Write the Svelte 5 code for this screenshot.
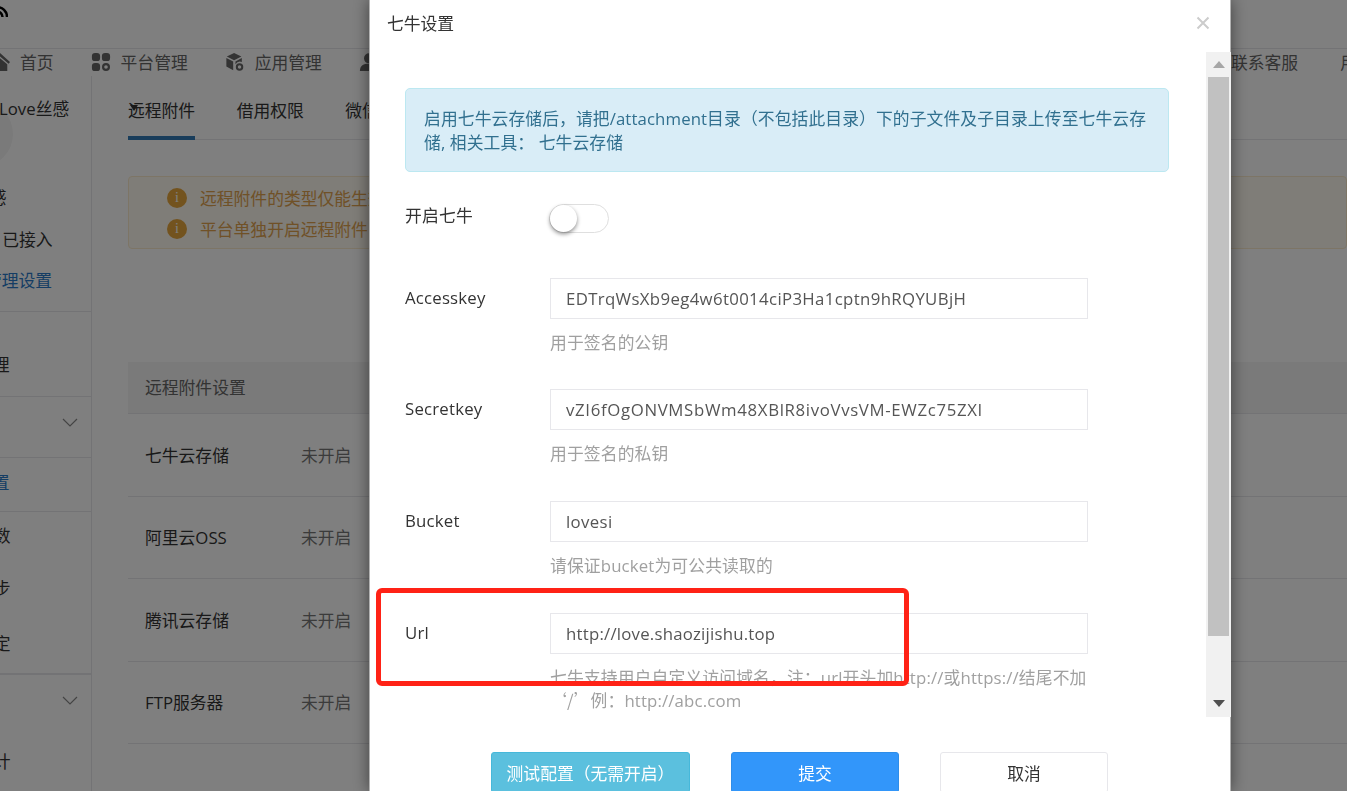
<script>
  const nav = [
    { label: "首页", icon: "home" },
    { label: "平台管理", icon: "grid" },
    { label: "应用管理", icon: "box" },
    { label: "用户管理", icon: "user" }
  ];
  const tabs = ["远程附件", "借用权限", "微信"];
  const storages = ["七牛云存储", "阿里云OSS", "腾讯云存储", "FTP服务器"];
  const fields = [
    { label: "Accesskey", value: "EDTrqWsXb9eg4w6t0014ciP3Ha1cptn9hRQYUBjH", help: "用于签名的公钥" },
    { label: "Secretkey", value: "vZI6fOgONVMSbWm48XBlR8ivoVvsVM-EWZc75ZXI", help: "用于签名的私钥" },
    { label: "Bucket", value: "lovesi", help: "请保证bucket为可公共读取的" },
    { label: "Url", value: "http://love.shaozijishu.top", help: "七牛支持用户自定义访问域名，注：url开头加http://或https://结尾不加", tail: true }
  ];
</script>

<div class="page">
  <header class="top">
    <svg class="logo" width="8" height="18" viewBox="0 0 8 18" aria-hidden="true">
      <path d="M-3 7A10 10 0 0 1 7 17M-3 11.500A5.500 5.500 0 0 1 2.500 17" fill="none" stroke="#000" stroke-width="2.500" />
    </svg>
  </header>

  <nav class="nav">
    {#each nav as item}
      <span class="nav-item">
        <svg width="20" height="20" viewBox="0 0 22 22" aria-hidden="true" fill="#666">
          {#if item.icon === "home"}
            <path d="M11 1 0 11l1.500 2L11 5l9.500 8 1.500-2z" />
            <path d="M3 13.500 11 7l8 6.500V21H3z" />
          {:else if item.icon === "grid"}
            <rect x="1" y="1" width="9" height="9" rx="3.500" />
            <rect x="12" y="1" width="9" height="9" rx="3.500" />
            <rect x="1" y="12" width="9" height="9" rx="3.500" />
            <circle cx="16.500" cy="16.500" r="3.200" fill="none" stroke="#666" stroke-width="2.400" />
          {:else if item.icon === "box"}
            <path d="M10 1 18 5 10 9 2 5zM1.500 6.500 9 10.500V20L1.500 16zM18.500 6.500V11a6 6 0 0 0-7 2.500V10.500z" />
            <circle cx="16" cy="16.500" r="3" fill="none" stroke="#666" stroke-width="2.200" />
          {:else}
            <circle cx="11" cy="7" r="5.500" />
            <path d="M1 21c0-6 4-8 10-8s10 2 10 8z" />
          {/if}
        </svg>
        {item.label}
      </span>
    {/each}
    <span class="nav-right">
      <span>联系客服</span>
      <span>用户</span>
    </span>
  </nav>

  <div class="layout">
    <aside class="side">
      <div class="avatar"></div>
      <p class="side-title">Love丝感</p>
      <p class="side-a">丝感</p>
      <p class="side-b">● 已接入</p>
      <p class="side-c">管理设置</p>
      <div class="side-rule"></div>
      <p class="side-d">管理</p>
      <div class="side-box short"><svg class="chev" width="16" height="10" viewBox="0 0 16 10"><path d="M1 1l7 7 7-7" fill="none" stroke="#888" stroke-width="1.200" /></svg></div>
      <p class="side-e">设置</p>
      <div class="side-box list">
        <p>参数</p>
        <p>同步</p>
        <p>绑定</p>
      </div>
      <div class="side-box last">
        <svg class="chev" width="16" height="10" viewBox="0 0 16 10"><path d="M1 1l7 7 7-7" fill="none" stroke="#888" stroke-width="1.200" /></svg>
        <p>统计</p>
      </div>
    </aside>

    <main class="main">
      <div class="tabs">
        {#each tabs as tab, i}
          <span class="tab" class:active={i === 0}>{tab}</span>
        {/each}
      </div>

      <div class="warn">
        <p><i>i</i>远程附件的类型仅能生效</p>
        <p><i>i</i>平台单独开启远程附件</p>
      </div>

      <div class="table-head">远程附件设置</div>
      {#each storages as name}
        <div class="row">
          <span class="row-name">{name}</span>
          <span class="row-state">未开启</span>
        </div>
      {/each}
    </main>
  </div>
</div>

<div class="overlay">
  <section class="modal">
    <div class="modal-head">
      <h2>七牛设置</h2>
      <svg class="close" width="14" height="14" viewBox="0 0 14 14" aria-hidden="true">
        <path d="M1.500 1.500l11 11M12.500 1.500l-11 11" stroke="#ccc" stroke-width="2" />
      </svg>
    </div>

    <div class="modal-body">
      <div class="content">
        <div class="notice">启用七牛云存储后，请把/attachment目录（不包括此目录）下的子文件及子目录上传至七牛云存储, 相关工具： 七牛云存储</div>

        <div class="form-row switch-row">
          <span class="label">开启七牛</span>
          <span class="switch"><span class="knob"></span></span>
        </div>

        {#each fields as field}
          <div class="form-row">
            <span class="label field-label">{field.label}</span>
            <div class="field">
              <div class="input">{field.value}</div>
              <p class="help">
                {field.help}
                {#if field.tail}
                  <br /><span class="quote">‘/’</span>例：http://abc.com
                {/if}
              </p>
            </div>
          </div>
        {/each}
      </div>

      <div class="scrollbar">
        <span class="arrow up"></span>
        <span class="track"><span class="thumb"></span></span>
        <span class="arrow down"></span>
      </div>
    </div>

    <div class="modal-foot">
      <button type="button" class="btn info">测试配置（无需开启）</button>
      <button type="button" class="btn primary">提交</button>
      <button type="button" class="btn plain">取消</button>
    </div>
  </section>

  <div class="mark"></div>
</div>

<style>
  :global(body) {
    margin: 0;
    background: #fff;
    overflow: hidden;
    font-family: "Open Sans", "Noto Sans CJK SC", sans-serif;
    font-size: 16.8px;
    color: #333;
    text-spacing-trim: space-all;
  }

  p {
    margin: 0;
  }

  .page {
    height: 791px;
    overflow: hidden;
  }

  .top {
    height: 49px;
    border-bottom: 1px solid #e7e7eb;
    box-sizing: border-box;
  }

  .logo {
    display: block;
  }

  .nav {
    display: flex;
    align-items: center;
    height: 27px;
    box-sizing: border-box;
    padding-bottom: 2px;
    color: #666;
    margin-left: -10px;
    white-space: nowrap;
  }

  .nav-item {
    display: flex;
    align-items: center;
    gap: 10px;
    margin-right: 37px;
  }

  .nav-right {
    display: flex;
    gap: 42px;
    margin-left: 738px;
  }

  .layout {
    display: flex;
    height: 715px;
  }

  .side {
    position: relative;
    flex: none;
    width: 92px;
    box-sizing: border-box;
    border-right: 1px solid #e7e7eb;
    overflow: hidden;
    white-space: nowrap;
  }

  .avatar {
    position: absolute;
    left: -53px;
    top: 25px;
    width: 66px;
    height: 66px;
    border-radius: 50%;
    background: #f4f4f4;
  }

  .side p {
    position: relative;
    line-height: 24px;
  }

  .side-title {
    margin-left: -1px;
    padding-top: 21px;
  }

  .side-a {
    margin: 65px 0 0 -27px;
  }

  .side-b {
    margin: 18px 0 0 -19px;
  }

  .side-c {
    margin: 17px 0 0 -15px;
    color: #2b7bc9;
  }

  .side-rule {
    margin-top: 18px;
    border-top: 1px solid #e7e7eb;
  }

  .side-d {
    margin: 41px 0 0 -24px;
  }

  .side-box {
    position: relative;
    border-top: 1px solid #e7e7eb;
    border-bottom: 1px solid #e7e7eb;
  }

  .short {
    margin-top: 19px;
    height: 60px;
  }

  .chev {
    position: absolute;
    right: 13px;
    top: 21px;
  }

  .side-e {
    margin: 13px 0 0 -24px;
    color: #2b7bc9;
  }

  .list {
    margin-top: 16px;
    height: 163px;
    padding-top: 12px;
    box-sizing: border-box;
  }

  .list p {
    margin: 0 0 29px -23px;
  }

  .list p:nth-child(2) {
    margin-bottom: 31px;
  }

  .last {
    height: 120px;
    border-bottom: 0;
    padding-top: 75px;
    box-sizing: border-box;
  }

  .last p {
    margin-left: -23px;
  }

  .main {
    flex: 1;
    min-width: 0;
    padding-left: 36px;
  }

  .tabs {
    display: flex;
    gap: 41.500px;
    height: 64px;
    box-sizing: border-box;
    padding-top: 23px;
    border-bottom: 1px solid #e7e7eb;
    white-space: nowrap;
  }

  .tab {
    position: relative;
    height: 40px;
    line-height: 24px;
  }

  .tab.active {
    box-sizing: border-box;
    height: 41px;
    border-bottom: 4px solid #337ab7;
  }

  .tab.active::before {
    content: "";
    position: absolute;
    left: 2px;
    top: 6px;
    border-left: 4px solid transparent;
    border-right: 4px solid transparent;
    border-top: 6px solid #333;
  }

  .warn {
    margin-top: 36px;
    height: 73px;
    box-sizing: border-box;
    padding: 5px 0 0 38px;
    background: #fffaf0;
    border: 1px solid #faebcc;
    border-radius: 4px;
    color: #e0a24e;
  }

  .warn p {
    display: flex;
    align-items: center;
    height: 31px;
  }

  .warn i {
    width: 20px;
    height: 20px;
    margin-right: 13px;
    border-radius: 50%;
    background: #e6a63c;
    color: #fff;
    font: 14px/20px "Liberation Serif", serif;
    text-align: center;
  }

  .table-head {
    margin-top: 113px;
    height: 52px;
    line-height: 52px;
    padding-left: 17px;
    background: #f4f4f4;
    border-bottom: 1px solid #e7e7eb;
    box-sizing: border-box;
    color: #666;
  }

  .row {
    display: flex;
    align-items: center;
    height: 82.500px;
    box-sizing: border-box;
    padding-left: 17px;
    border-bottom: 1px solid #e7e7eb;
  }

  .row-name {
    width: 156px;
  }

  .row-state {
    color: #777;
  }

  .overlay {
    position: fixed;
    inset: 0;
    background: rgba(0, 0, 0, 0.5);
  }

  .modal {
    position: absolute;
    left: 369px;
    top: 0;
    width: 862px;
    height: 791px;
    box-sizing: border-box;
    background: #fff;
    border-left: 1px solid rgba(0, 0, 0, 0.3);
    border-right: 1px solid rgba(0, 0, 0, 0.3);
    box-shadow: 0 0 15px rgba(0, 0, 0, 0.5);
  }

  .modal-head {
    display: flex;
    align-items: center;
    justify-content: space-between;
    height: 52px;
    box-sizing: border-box;
    padding: 0 20px 6px 17px;
  }

  .modal-head h2 {
    margin: 0;
    font-size: 16.8px;
    font-weight: 400;
    color: #333;
  }

  .close {
    display: block;
  }

  .modal-body {
    display: flex;
    height: 665px;
  }

  .content {
    flex: 1;
    min-width: 0;
    overflow: hidden;
    padding: 36px 37px 0 35px;
  }

  .notice {
    box-sizing: border-box;
    height: 84px;
    padding: 18px;
    line-height: 24px;
    letter-spacing: 0.1px;
    background: #d9edf7;
    border: 1px solid #bce8f1;
    border-radius: 5px;
    color: #31708f;
  }

  .form-row {
    display: grid;
    grid-template-columns: 145px 538px;
    margin-bottom: 36px;
  }

  .form-row:nth-child(3) {
    margin-bottom: 35px;
  }

  .switch-row {
    margin: 32px 0 44px;
    height: 30px;
  }

  .label {
    line-height: 24px;
    letter-spacing: 0.2px;
  }

  .field-label {
    padding-top: 8px;
  }

  .switch {
    position: relative;
    display: block;
    width: 60px;
    height: 29px;
    margin-left: -1px;
    box-sizing: border-box;
    border: 1px solid #dfdfdf;
    border-radius: 15px;
  }

  .knob {
    position: absolute;
    left: 0;
    top: 0;
    width: 27px;
    height: 27px;
    border-radius: 50%;
    background: #fff;
    box-shadow: 0 2px 4px rgba(0, 0, 0, 0.45);
  }

  .input {
    height: 41px;
    box-sizing: border-box;
    padding: 0 15px;
    line-height: 39px;
    letter-spacing: 0.35px;
    border: 1px solid #e7e7eb;
    color: #555;
  }

  .form-row:nth-child(4) .input {
    letter-spacing: 0.66px;
  }

  .form-row:nth-child(6) .input {
    letter-spacing: 0.22px;
  }

  .help {
    margin-top: 12px;
    line-height: 23px;
    letter-spacing: 0.14px;
    color: #a0a0a0;
    white-space: nowrap;
  }

  .quote {
    font-family: "Noto Sans CJK SC", sans-serif;
  }

  .scrollbar {
    position: relative;
    flex: none;
    display: flex;
    flex-direction: column;
    align-items: center;
    width: 25px;
    margin-right: -1px;
    background: #f1f1f1;
  }

  .arrow {
    display: block;
    flex: none;
    width: 0;
    height: 0;
    border-left: 6px solid transparent;
    border-right: 6px solid transparent;
  }

  .arrow.up {
    margin: 9px 0;
    border-bottom: 7px solid #a6a6a6;
  }

  .arrow.down {
    margin: 8px 0 10px;
    border-top: 7px solid #505050;
  }

  .track {
    flex: 1;
    width: 21px;
  }

  .thumb {
    display: block;
    height: 559px;
    background: #c1c1c1;
  }

  .modal-foot {
    display: flex;
    gap: 41px;
    padding: 35px 0 0 121px;
  }

  .btn {
    height: 41px;
    padding: 0;
    border: 1px solid transparent;
    border-radius: 3px;
    font: inherit;
    color: #fff;
  }

  .info {
    width: 199px;
    background: #5bc0de;
    border-color: #46b8da;
  }

  .primary {
    width: 168px;
    background: #3296fa;
    border-color: #2e8de8;
  }

  .plain {
    width: 168px;
    background: #fff;
    border-color: #e7e7eb;
    color: #333;
  }

  .mark {
    position: absolute;
    left: 376px;
    top: 588px;
    width: 533px;
    height: 98px;
    box-sizing: border-box;
    border: 5px solid #ff2216;
    border-radius: 6px;
  }
</style>
